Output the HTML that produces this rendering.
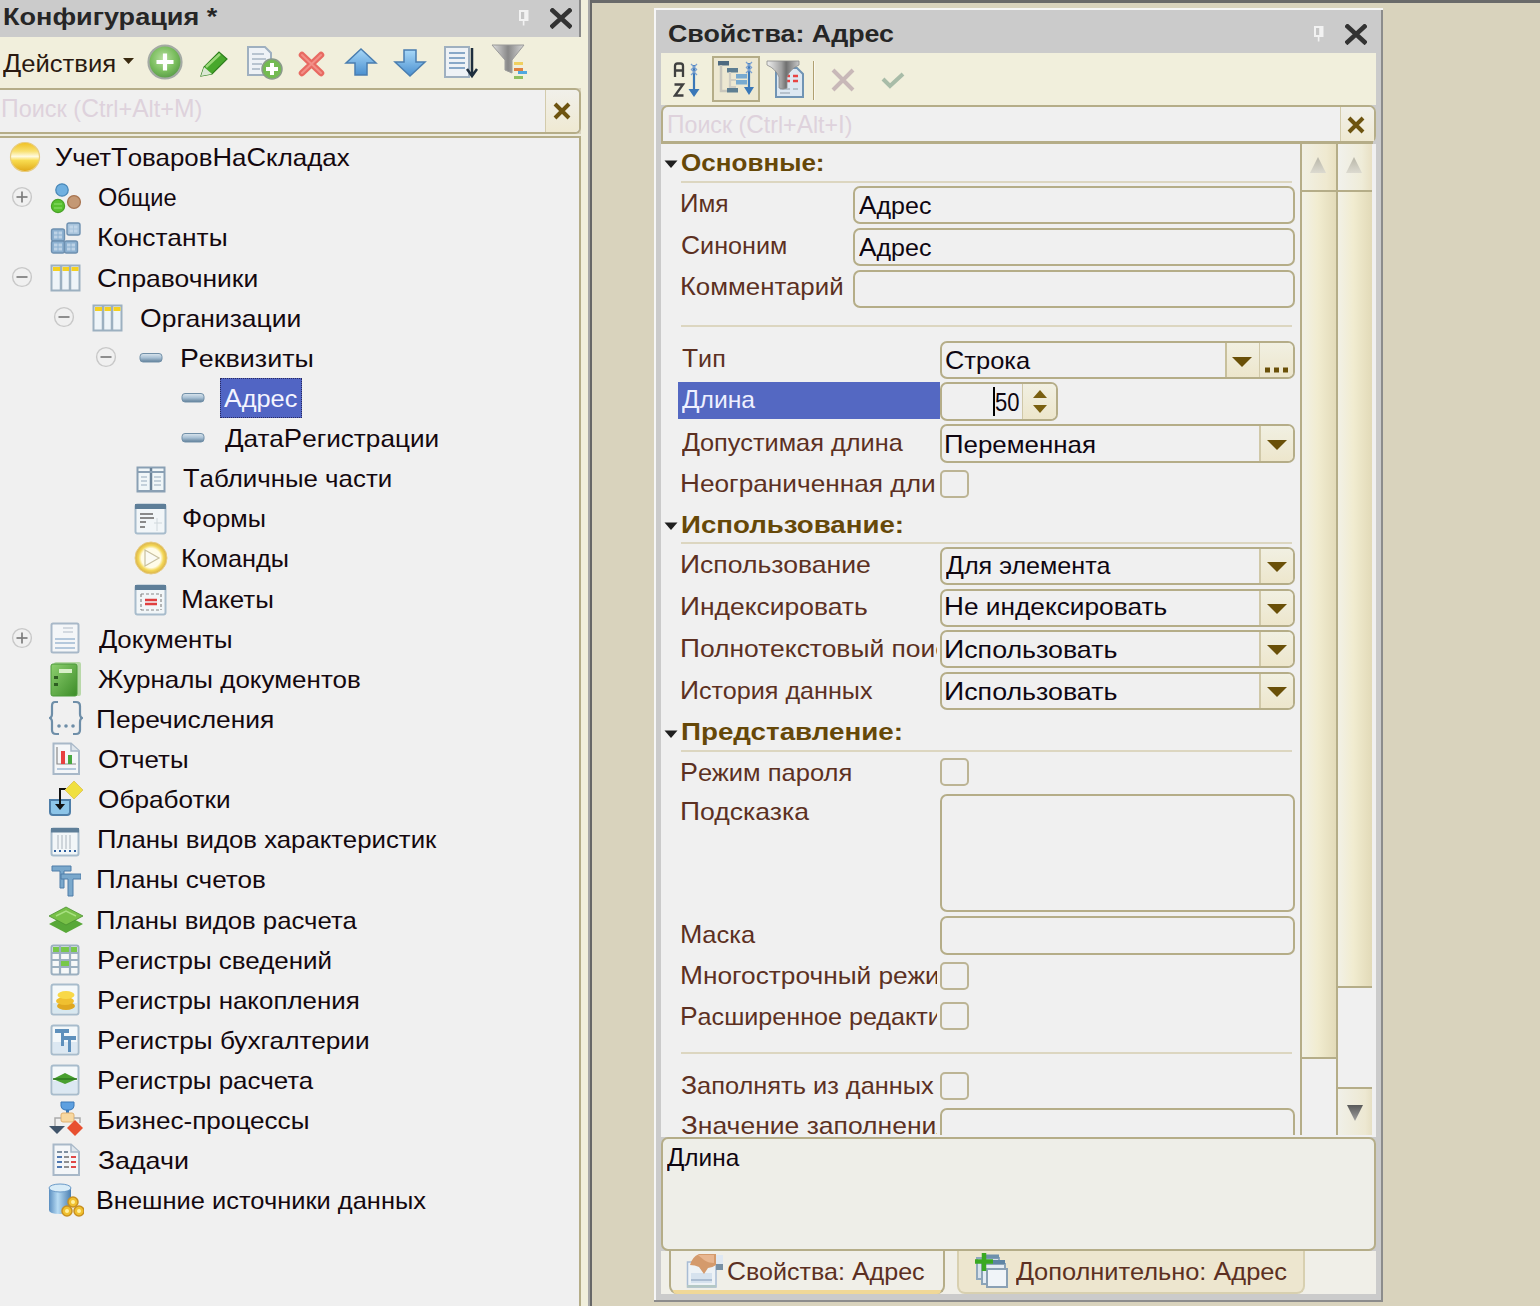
<!DOCTYPE html>
<html><head><meta charset="utf-8"><style>
html,body{margin:0;padding:0}
body{width:1540px;height:1306px;overflow:hidden;position:relative;background:#d9d3bd;font-family:"Liberation Sans",sans-serif}
body div, body svg{position:absolute}
.t{white-space:pre;font-family:"Liberation Sans",sans-serif}
</style></head><body>
<div style="left:590px;top:0px;width:950px;height:3px;background:#6a6a6a"></div>
<div style="left:590px;top:0px;width:2px;height:1306px;background:#676767"></div>
<div style="left:588px;top:0px;width:2px;height:1306px;background:#a8a8a8"></div>
<div style="left:581px;top:0px;width:7px;height:1306px;background:#f1efdc"></div>
<div style="left:0px;top:0px;width:579px;height:37px;background:#cbcbcb"></div>
<div style="left:579px;top:0px;width:2px;height:37px;background:#8a8a8a"></div>
<div style="left:0px;top:37px;width:581px;height:51px;background:#f1efdc"></div>
<div style="left:0px;top:88px;width:581px;height:46px;background:#f0f0f0;border-top:2px solid #b5ad88;border-bottom:2px solid #b5ad88;border-right:2px solid #b5ad88;box-sizing:border-box;border-top-right-radius:6px;border-bottom-right-radius:6px"></div>
<div style="left:545px;top:90px;width:34px;height:42px;background:linear-gradient(#f1f0ea,#efe9d2);border-left:1px solid #d3cbac;box-sizing:border-box;border-top-right-radius:5px;border-bottom-right-radius:5px"></div>
<div style="left:0px;top:134px;width:581px;height:2px;background:#eeede0"></div>
<div style="left:0px;top:136px;width:581px;height:1170px;background:#f0f0f0;border-top:2px solid #b5ad88;border-right:2px solid #b5ad88;box-sizing:border-box"></div>
<div class="t" style="left:2.87px;top:5px;font-size:24px;line-height:24px;color:#262626;font-weight:700;letter-spacing:0px;transform:scaleX(1.1270);transform-origin:0 0;">К<span style="font-size:24px">онфигурация *</span></div>
<svg style="left:519px;top:10px" width="10" height="16" viewBox="0 0 10 16"><rect x="0" y="0" width="9.5" height="11" fill="#f2f2f2"/><rect x="2" y="2" width="3.2" height="7" fill="#c6c6c6"/><rect x="3.8" y="11" width="1.6" height="4.5" fill="#f2f2f2"/></svg>
<svg style="left:550px;top:8px" width="22" height="21" viewBox="0 0 22 21"><path d="M2.5 2.5 L19.5 18 M19.5 2.5 L2.5 18" stroke="#333" stroke-width="4.6" stroke-linecap="square"/></svg>
<div class="t" style="left:3.0px;top:51px;font-size:25px;line-height:25px;color:#2a1a10;font-weight:400;letter-spacing:0px;transform:scaleX(1.0769);transform-origin:0 0;">Д<span style="font-size:23.8px">ействия</span></div>
<svg style="left:123px;top:58px" width="12" height="7" viewBox="0 0 12 7"><path d="M0 0 H11 L5.5 6 Z" fill="#3a2a10"/></svg>
<svg style="left:146px;top:43px" width="38" height="38" viewBox="0 0 38 38"><defs><radialGradient id="gp" cx="45%" cy="40%" r="60%"><stop offset="0" stop-color="#b8e0a0"/><stop offset="0.65" stop-color="#78bc5c"/><stop offset="1" stop-color="#5a9c48"/></radialGradient></defs><circle cx="19" cy="19" r="16.5" fill="url(#gp)" stroke="#a4aaa4" stroke-width="2.2"/><path d="M19 10.5 V27.5 M10.5 19 H27.5" stroke="#fff" stroke-width="4.2"/></svg>
<svg style="left:199px;top:49px" width="31" height="29" viewBox="0 0 31 29"><path d="M2 27 L5 18 L20 3 L28 10 L13 25 Z" fill="#48a82c" stroke="#2e7e1e" stroke-width="1.2"/><path d="M2 27 L5 18 L9 21.5 L13 25 Z" fill="#dce8d4"/><path d="M7 18 L21 5" stroke="#9ad878" stroke-width="2.5"/></svg>
<svg style="left:246px;top:45px" width="38" height="36" viewBox="0 0 38 36"><path d="M2 2 H19 L25 8 V30 H2 Z" fill="#eef2f6" stroke="#9fb0c0" stroke-width="2"/><path d="M6 9 H18 M6 14 H20 M6 19 H16 M6 24 H14" stroke="#b8c4d0" stroke-width="2"/><circle cx="26" cy="24" r="10" fill="#74bb52" stroke="#8a9a8a" stroke-width="1.5"/><path d="M26 18 V30 M20 24 H32" stroke="#fff" stroke-width="4"/></svg>
<svg style="left:297px;top:50px" width="29" height="28" viewBox="0 0 29 28"><path d="M5 5 L24 23 M24 5 L5 23" stroke="#e86a62" stroke-width="6.5" stroke-linecap="round"/><path d="M5 5 L24 23 M24 5 L5 23" stroke="#f29088" stroke-width="2" stroke-linecap="round"/></svg>
<svg style="left:344px;top:47px" width="34" height="31" viewBox="0 0 34 31"><defs><linearGradient id="ua" x1="0" y1="0" x2="0" y2="1"><stop offset="0" stop-color="#a8d8f8"/><stop offset="1" stop-color="#4a90d0"/></linearGradient></defs><path d="M17 2 L32 16 H23 V28 H11 V16 H2 Z" fill="url(#ua)" stroke="#4a7eb0" stroke-width="1.5"/></svg>
<svg style="left:393px;top:47px" width="34" height="31" viewBox="0 0 34 31"><path d="M17 29 L32 15 H23 V3 H11 V15 H2 Z" fill="url(#ua)" stroke="#4a7eb0" stroke-width="1.5"/></svg>
<svg style="left:443px;top:45px" width="35" height="36" viewBox="0 0 35 36"><rect x="2" y="2" width="24" height="30" fill="#eef2f6" stroke="#9fb0c0" stroke-width="2"/><path d="M6 8 H22 M6 13 H22 M6 18 H22 M6 23 H22" stroke="#88a8c8" stroke-width="2"/><path d="M29 3 V30 M24 24 L29 31 L34 24" stroke="#1e2e3e" stroke-width="2.5" fill="none"/></svg>
<svg style="left:490px;top:43px" width="40" height="38" viewBox="0 0 40 38"><defs><linearGradient id="fn" x1="0" x2="1"><stop offset="0" stop-color="#e0e0e0"/><stop offset="0.5" stop-color="#888"/><stop offset="1" stop-color="#d8d8d8"/></linearGradient></defs><path d="M2 2 H34 L22 17 V30 L15 27 V17 Z" fill="url(#fn)" stroke="#9a9a9a" stroke-width="1"/><rect x="24" y="19" width="9" height="3" fill="#f0d060"/><rect x="24" y="25" width="9" height="3" fill="#e08040"/><rect x="28" y="28" width="9" height="3" fill="#50a8e0"/><rect x="24" y="33" width="9" height="3" fill="#90c060"/></svg>
<div class="t" style="left:0.53px;top:96px;font-size:25px;line-height:25px;color:#ded2dc;font-weight:400;letter-spacing:0px;transform:scaleX(0.9851);transform-origin:0 0;">П<span style="font-size:23.8px">оиск (</span>C<span style="font-size:23.8px">trl+</span>A<span style="font-size:23.8px">lt+</span>M<span style="font-size:23.8px">)</span></div>
<svg style="left:552px;top:101px" width="20" height="20" viewBox="0 0 20 20"><path d="M3 3 L17 17 M17 3 L3 17" stroke="#6e5410" stroke-width="4"/></svg>
<svg style="left:9px;top:141px" width="32" height="32" viewBox="0 0 32 32"><defs><linearGradient id="gb" x1="0" y1="0" x2="0" y2="1"><stop offset="0" stop-color="#f0c020"/><stop offset="0.3" stop-color="#f8e070"/><stop offset="0.48" stop-color="#fffae0"/><stop offset="0.62" stop-color="#f8dc50"/><stop offset="1" stop-color="#e0a818"/></linearGradient></defs><circle cx="16" cy="16" r="14.5" fill="url(#gb)" stroke="#e8cc80" stroke-width="1.2"/></svg>
<div class="t" style="left:55.11px;top:145px;font-size:25px;line-height:25px;color:#14080e;font-weight:400;letter-spacing:0px;transform:scaleX(1.0867);transform-origin:0 0;">У<span style="font-size:23.8px">чет</span>Т<span style="font-size:23.8px">оваров</span>Н<span style="font-size:23.8px">а</span>С<span style="font-size:23.8px">кладах</span></div>
<svg style="left:11px;top:186px" width="22" height="22" viewBox="0 0 22 22"><circle cx="11" cy="11" r="9.4" fill="none" stroke="#c8c8c8" stroke-width="1.4"/><path d="M5.5 11 H16.5" stroke="#7c7c7c" stroke-width="1.7"/><path d="M11 5.5 V16.5" stroke="#7c7c7c" stroke-width="1.7"/></svg>
<svg style="left:50px;top:183px" width="32" height="32" viewBox="0 0 32 32"><circle cx="12" cy="7" r="6.2" fill="#70b0e0" stroke="#4a88b8" stroke-width="1.3"/><circle cx="8" cy="23" r="6.6" fill="#58c030" stroke="#48a028" stroke-width="1.2"/><path d="M4 21 H12 M4 25 H12" stroke="#90e070" stroke-width="1"/><circle cx="24" cy="19" r="6.4" fill="#c49874" stroke="#a87450" stroke-width="1.3"/></svg>
<div class="t" style="left:98.01px;top:185px;font-size:25px;line-height:25px;color:#14080e;font-weight:400;letter-spacing:0px;transform:scaleX(0.9922);transform-origin:0 0;">О<span style="font-size:23.8px">бщие</span></div>
<svg style="left:50px;top:222px" width="32" height="32" viewBox="0 0 32 32"><rect x="1.5" y="7" width="13" height="12" rx="2" fill="#8cb0d0" stroke="#6e90b0" stroke-width="1.4"/><rect x="4.0" y="9.5" width="3.5" height="3" fill="#c4d8ea" opacity="0.85"/><rect x="4.0" y="13.5" width="3.5" height="3" fill="#c4d8ea" opacity="0.85"/><rect x="8.5" y="9.5" width="3.5" height="3" fill="#c4d8ea" opacity="0.85"/><rect x="8.5" y="13.5" width="3.5" height="3" fill="#c4d8ea" opacity="0.85"/><rect x="1.5" y="19" width="13" height="12" rx="2" fill="#8cb0d0" stroke="#6e90b0" stroke-width="1.4"/><rect x="4.0" y="21.5" width="3.5" height="3" fill="#c4d8ea" opacity="0.85"/><rect x="4.0" y="25.5" width="3.5" height="3" fill="#c4d8ea" opacity="0.85"/><rect x="8.5" y="21.5" width="3.5" height="3" fill="#c4d8ea" opacity="0.85"/><rect x="8.5" y="25.5" width="3.5" height="3" fill="#c4d8ea" opacity="0.85"/><rect x="14.5" y="19" width="13" height="12" rx="2" fill="#8cb0d0" stroke="#6e90b0" stroke-width="1.4"/><rect x="17.0" y="21.5" width="3.5" height="3" fill="#c4d8ea" opacity="0.85"/><rect x="17.0" y="25.5" width="3.5" height="3" fill="#c4d8ea" opacity="0.85"/><rect x="21.5" y="21.5" width="3.5" height="3" fill="#c4d8ea" opacity="0.85"/><rect x="21.5" y="25.5" width="3.5" height="3" fill="#c4d8ea" opacity="0.85"/><rect x="17" y="1" width="13" height="12" rx="2" fill="#a8c4dc" stroke="#6e90b0" stroke-width="1.4"/><rect x="19.5" y="3.5" width="3.5" height="3" fill="#c4d8ea" opacity="0.85"/><rect x="19.5" y="7.5" width="3.5" height="3" fill="#c4d8ea" opacity="0.85"/><rect x="24" y="3.5" width="3.5" height="3" fill="#c4d8ea" opacity="0.85"/><rect x="24" y="7.5" width="3.5" height="3" fill="#c4d8ea" opacity="0.85"/></svg>
<div class="t" style="left:96.78px;top:225px;font-size:25px;line-height:25px;color:#14080e;font-weight:400;letter-spacing:0px;transform:scaleX(1.1079);transform-origin:0 0;">К<span style="font-size:23.8px">онстанты</span></div>
<svg style="left:11px;top:266px" width="22" height="22" viewBox="0 0 22 22"><circle cx="11" cy="11" r="9.4" fill="none" stroke="#c8c8c8" stroke-width="1.4"/><path d="M5.5 11 H16.5" stroke="#7c7c7c" stroke-width="1.7"/></svg>
<svg style="left:50px;top:264px" width="32" height="28" viewBox="0 0 32 28"><rect x="1.5" y="1.5" width="28" height="25" fill="#eef4f8" stroke="#9cb0c0" stroke-width="2"/><path d="M11 2 V26 M20 2 V26" stroke="#9cb0c0" stroke-width="2.5"/><rect x="3" y="3" width="7" height="4" fill="#f4d020"/><rect x="12.5" y="3" width="6.5" height="4" fill="#f4d020"/><rect x="21.5" y="3" width="7" height="4" fill="#f4d020"/></svg>
<div class="t" style="left:97.49px;top:266px;font-size:25px;line-height:25px;color:#14080e;font-weight:400;letter-spacing:0px;transform:scaleX(1.1112);transform-origin:0 0;">С<span style="font-size:23.8px">правочники</span></div>
<svg style="left:53px;top:306px" width="22" height="22" viewBox="0 0 22 22"><circle cx="11" cy="11" r="9.4" fill="none" stroke="#c8c8c8" stroke-width="1.4"/><path d="M5.5 11 H16.5" stroke="#7c7c7c" stroke-width="1.7"/></svg>
<svg style="left:92px;top:304px" width="32" height="28" viewBox="0 0 32 28"><rect x="1.5" y="1.5" width="28" height="25" fill="#eef4f8" stroke="#9cb0c0" stroke-width="2"/><path d="M11 2 V26 M20 2 V26" stroke="#9cb0c0" stroke-width="2.5"/><rect x="3" y="3" width="7" height="4" fill="#f4d020"/><rect x="12.5" y="3" width="6.5" height="4" fill="#f4d020"/><rect x="21.5" y="3" width="7" height="4" fill="#f4d020"/></svg>
<div class="t" style="left:139.89px;top:306px;font-size:25px;line-height:25px;color:#14080e;font-weight:400;letter-spacing:0px;transform:scaleX(1.1134);transform-origin:0 0;">О<span style="font-size:23.8px">рганизации</span></div>
<svg style="left:95px;top:346px" width="22" height="22" viewBox="0 0 22 22"><circle cx="11" cy="11" r="9.4" fill="none" stroke="#c8c8c8" stroke-width="1.4"/><path d="M5.5 11 H16.5" stroke="#7c7c7c" stroke-width="1.7"/></svg>
<svg style="left:139px;top:352px" width="24" height="12" viewBox="0 0 24 12"><defs><linearGradient id="ga" x1="0" y1="0" x2="0" y2="1"><stop offset="0" stop-color="#dbe6ee"/><stop offset="0.5" stop-color="#a8c0d4"/><stop offset="1" stop-color="#5e7e98"/></linearGradient></defs><rect x="1" y="1.5" width="22" height="8.5" rx="3" fill="url(#ga)" stroke="#7290a8" stroke-width="1"/></svg>
<div class="t" style="left:180.44px;top:346px;font-size:25px;line-height:25px;color:#14080e;font-weight:400;letter-spacing:0px;transform:scaleX(1.1296);transform-origin:0 0;">Р<span style="font-size:23.8px">еквизиты</span></div>
<svg style="left:181px;top:392px" width="24" height="12" viewBox="0 0 24 12"><defs><linearGradient id="ga" x1="0" y1="0" x2="0" y2="1"><stop offset="0" stop-color="#dbe6ee"/><stop offset="0.5" stop-color="#a8c0d4"/><stop offset="1" stop-color="#5e7e98"/></linearGradient></defs><rect x="1" y="1.5" width="22" height="8.5" rx="3" fill="url(#ga)" stroke="#7290a8" stroke-width="1"/></svg>
<div style="left:220px;top:378px;width:82px;height:40px;background:#5165c4;outline:1px dotted #2a2a60;outline-offset:-1px"></div>
<div class="t" style="left:224.3px;top:386px;font-size:25px;line-height:25px;color:#f4f4ff;font-weight:400;letter-spacing:0px;transform:scaleX(1.0632);transform-origin:0 0;">А<span style="font-size:23.8px">дрес</span></div>
<svg style="left:181px;top:432px" width="24" height="12" viewBox="0 0 24 12"><defs><linearGradient id="ga" x1="0" y1="0" x2="0" y2="1"><stop offset="0" stop-color="#dbe6ee"/><stop offset="0.5" stop-color="#a8c0d4"/><stop offset="1" stop-color="#5e7e98"/></linearGradient></defs><rect x="1" y="1.5" width="22" height="8.5" rx="3" fill="url(#ga)" stroke="#7290a8" stroke-width="1"/></svg>
<div class="t" style="left:224.5px;top:426px;font-size:25px;line-height:25px;color:#14080e;font-weight:400;letter-spacing:0px;transform:scaleX(1.0984);transform-origin:0 0;">Д<span style="font-size:23.8px">ата</span>Р<span style="font-size:23.8px">егистрации</span></div>
<svg style="left:136px;top:466px" width="30" height="28" viewBox="0 0 30 28"><rect x="1.5" y="1.5" width="27" height="24" fill="#f0f6f8" stroke="#8aa0b4" stroke-width="2"/><path d="M15 2 V26" stroke="#6a8298" stroke-width="2.5"/><path d="M2 6 H28 M2 25 H28" stroke="#8aa0b4" stroke-width="2"/><path d="M5 11 H11 M5 15 H11 M5 19 H11 M18 11 H25 M18 15 H25 M18 19 H25" stroke="#b4c4d0" stroke-width="1.5"/></svg>
<div class="t" style="left:183.4px;top:466px;font-size:25px;line-height:25px;color:#14080e;font-weight:400;letter-spacing:0px;transform:scaleX(1.0869);transform-origin:0 0;">Т<span style="font-size:23.8px">абличные части</span></div>
<svg style="left:134px;top:503px" width="34" height="32" viewBox="0 0 34 32"><rect x="1.5" y="1.5" width="30" height="29" rx="2" fill="#f2f6f8" stroke="#a8bccc" stroke-width="2"/><rect x="1" y="1" width="31" height="5" fill="#5e7e98"/><path d="M6 11 H19 M6 15 H20 M6 19 H12 M6 24 H11" stroke="#8a8a8a" stroke-width="2.2"/><path d="M20 20 H28 M23 15 V28" stroke="#d0d8dc" stroke-width="1"/></svg>
<div class="t" style="left:181.64px;top:506px;font-size:25px;line-height:25px;color:#14080e;font-weight:400;letter-spacing:0px;transform:scaleX(1.0632);transform-origin:0 0;">Ф<span style="font-size:23.8px">ормы</span></div>
<svg style="left:134px;top:541px" width="34" height="34" viewBox="0 0 34 34"><defs><radialGradient id="gc" cx="50%" cy="50%" r="50%"><stop offset="0.6" stop-color="#fffce8"/><stop offset="0.78" stop-color="#f4d858"/><stop offset="1" stop-color="#d8b048"/></radialGradient></defs><circle cx="17" cy="17" r="16" fill="url(#gc)" stroke="#e8cc80" stroke-width="1"/><path d="M11 9 L25 17 L11 25 Z" fill="#fbfbf4" stroke="#c8c0a0" stroke-width="1.2"/></svg>
<div class="t" style="left:180.58px;top:546px;font-size:25px;line-height:25px;color:#14080e;font-weight:400;letter-spacing:0px;transform:scaleX(1.0622);transform-origin:0 0;">К<span style="font-size:23.8px">оманды</span></div>
<svg style="left:134px;top:584px" width="34" height="32" viewBox="0 0 34 32"><rect x="1.5" y="1.5" width="30" height="29" rx="2" fill="#f2f6f8" stroke="#a8bccc" stroke-width="2"/><rect x="1" y="1" width="31" height="5" fill="#5e7e98"/><path d="M7 10 H27 M7 26 H27" stroke="#888" stroke-width="1.2" stroke-dasharray="3 2"/><path d="M7 10 V26 M27 10 V26" stroke="#888" stroke-width="1.2" stroke-dasharray="3 2"/><path d="M11 16 H23 M11 20 H23" stroke="#e04040" stroke-width="2.5"/></svg>
<div class="t" style="left:180.52px;top:587px;font-size:25px;line-height:25px;color:#14080e;font-weight:400;letter-spacing:0px;transform:scaleX(1.0902);transform-origin:0 0;">М<span style="font-size:23.8px">акеты</span></div>
<svg style="left:11px;top:627px" width="22" height="22" viewBox="0 0 22 22"><circle cx="11" cy="11" r="9.4" fill="none" stroke="#c8c8c8" stroke-width="1.4"/><path d="M5.5 11 H16.5" stroke="#7c7c7c" stroke-width="1.7"/><path d="M11 5.5 V16.5" stroke="#7c7c7c" stroke-width="1.7"/></svg>
<svg style="left:50px;top:622px" width="30" height="32" viewBox="0 0 30 32"><rect x="1.5" y="1.5" width="27" height="29" rx="1.5" fill="#f4f6f8" stroke="#a8b8c8" stroke-width="2"/><path d="M13 6 H23 M13 10 H23" stroke="#c8d0d8" stroke-width="1.5"/><path d="M5 17 H25 M5 21 H25 M5 26 H25" stroke="#b4c8dc" stroke-width="2"/></svg>
<div class="t" style="left:98.6px;top:627px;font-size:25px;line-height:25px;color:#14080e;font-weight:400;letter-spacing:0px;transform:scaleX(1.0844);transform-origin:0 0;">Д<span style="font-size:23.8px">окументы</span></div>
<svg style="left:50px;top:661px" width="32" height="36" viewBox="0 0 32 36"><defs><linearGradient id="gj" x1="0" y1="0" x2="1" y2="1"><stop offset="0" stop-color="#8ed070"/><stop offset="1" stop-color="#3c8c28"/></linearGradient></defs><rect x="4" y="1" width="27" height="34" rx="2" fill="#b8d8a8"/><rect x="1" y="3" width="26" height="32" rx="2" fill="url(#gj)" stroke="#4a9a38" stroke-width="1"/><rect x="9" y="8" width="13" height="4" fill="#d8f0c8"/><rect x="4" y="15" width="4" height="3" fill="#2e5e22"/><rect x="4" y="22" width="4" height="3" fill="#2e5e22"/></svg>
<div class="t" style="left:97.51px;top:667px;font-size:25px;line-height:25px;color:#14080e;font-weight:400;letter-spacing:0px;transform:scaleX(1.0921);transform-origin:0 0;">Ж<span style="font-size:23.8px">урналы документов</span></div>
<svg style="left:49px;top:700px" width="34" height="36" viewBox="0 0 34 36"><path d="M9 2 H6 Q3 2 3 6 V14 Q3 17 1 18 Q3 19 3 22 V30 Q3 34 7 34 H10 M24 2 H27 Q31 2 31 6 V14 Q31 17 33 18 Q31 19 31 22 V30 Q31 34 27 34 H24" stroke="#6e8ea8" stroke-width="2.2" fill="none"/><circle cx="10" cy="26" r="1.8" fill="#6e8ea8"/><circle cx="17" cy="26" r="1.8" fill="#6e8ea8"/><circle cx="24" cy="26" r="1.8" fill="#6e8ea8"/></svg>
<div class="t" style="left:96.38px;top:707px;font-size:25px;line-height:25px;color:#14080e;font-weight:400;letter-spacing:0px;transform:scaleX(1.1083);transform-origin:0 0;">П<span style="font-size:23.8px">еречисления</span></div>
<svg style="left:52px;top:742px" width="30" height="34" viewBox="0 0 30 34"><path d="M1.5 1.5 H19 L27 9 V32 H1.5 Z" fill="#f4f6f8" stroke="#a8b8c8" stroke-width="2"/><path d="M19 2 V9 H27" fill="#dfe6ec" stroke="#a8b8c8" stroke-width="1.5"/><path d="M5 5 V22 H24" stroke="#8a8a8a" stroke-width="1.2" fill="none"/><rect x="9" y="9" width="4" height="13" fill="#e84040"/><rect x="16" y="13" width="4" height="9" fill="#48a840"/><path d="M5 27 H24" stroke="#b4c8dc" stroke-width="2"/></svg>
<div class="t" style="left:97.51px;top:747px;font-size:25px;line-height:25px;color:#14080e;font-weight:400;letter-spacing:0px;transform:scaleX(1.0889);transform-origin:0 0;">О<span style="font-size:23.8px">тчеты</span></div>
<svg style="left:48px;top:780px" width="36" height="36" viewBox="0 0 36 36"><path d="M2 20 H22 V32 Q22 35 19 35 H5 Q2 35 2 32 Z" fill="#8cc4e8" stroke="#4e7ea8" stroke-width="2"/><path d="M12 26 V9 H22" stroke="#111" stroke-width="2" fill="none"/><path d="M7 24 L12 30 L17 24 Z" fill="#111"/><path d="M26 1 L35 10 L26 19 L17 10 Z" fill="#f0e040" stroke="#e0c860" stroke-width="1"/></svg>
<div class="t" style="left:97.5px;top:787px;font-size:25px;line-height:25px;color:#14080e;font-weight:400;letter-spacing:0px;transform:scaleX(1.1000);transform-origin:0 0;">О<span style="font-size:23.8px">бработки</span></div>
<svg style="left:50px;top:827px" width="30" height="30" viewBox="0 0 30 30"><rect x="1.5" y="1.5" width="27" height="27" rx="2" fill="#f2f6f8" stroke="#a8bccc" stroke-width="2"/><rect x="1" y="1" width="28" height="4.5" fill="#5e7e98"/><path d="M8 8 V22 M12 8 V22 M16 8 V22 M20 8 V22" stroke="#b8c0c8" stroke-width="1.2"/><path d="M4 24 H26" stroke="#3060a0" stroke-width="2" stroke-dasharray="2 3"/></svg>
<div class="t" style="left:97.03px;top:827px;font-size:25px;line-height:25px;color:#14080e;font-weight:400;letter-spacing:0px;transform:scaleX(1.0836);transform-origin:0 0;">П<span style="font-size:23.8px">ланы видов характеристик</span></div>
<svg style="left:51px;top:865px" width="30" height="32" viewBox="0 0 30 32"><g fill="#7aa8cc" stroke="#4e7ca8" stroke-width="1"><path d="M1 1 H20 V6 H13 V23 H9 V6 H1 Z"/><path d="M10 9 H30 V14 H22 V31 H17 V14 H10 Z"/></g></svg>
<div class="t" style="left:96.41px;top:867px;font-size:25px;line-height:25px;color:#14080e;font-weight:400;letter-spacing:0px;transform:scaleX(1.0961);transform-origin:0 0;">П<span style="font-size:23.8px">ланы счетов</span></div>
<svg style="left:48px;top:906px" width="36" height="28" viewBox="0 0 36 28"><path d="M1 18 L18 9 L35 18 L18 27 Z" fill="#58a838"/><path d="M1 10 L18 1 L35 10 L18 19 Z" fill="#78c048" stroke="#4a9030" stroke-width="0.8"/><path d="M8 10 L18 5 L28 10" stroke="#a8e080" stroke-width="1.5" fill="none"/></svg>
<div class="t" style="left:96.44px;top:908px;font-size:25px;line-height:25px;color:#14080e;font-weight:400;letter-spacing:0px;transform:scaleX(1.0816);transform-origin:0 0;">П<span style="font-size:23.8px">ланы видов расчета</span></div>
<svg style="left:50px;top:944px" width="30" height="32" viewBox="0 0 30 32"><rect x="1.5" y="1.5" width="27" height="29" rx="2" fill="#f6f8f8" stroke="#9cb0c0" stroke-width="2"/><rect x="3" y="3" width="24" height="5" fill="#78c848"/><path d="M10 2 V30 M20 2 V30 M2 9 H28 M2 16 H28 M2 23 H28" stroke="#9cb0c0" stroke-width="2.2"/><rect x="11" y="17" width="8" height="5" fill="#78c848"/></svg>
<div class="t" style="left:96.52px;top:948px;font-size:25px;line-height:25px;color:#14080e;font-weight:400;letter-spacing:0px;transform:scaleX(1.0910);transform-origin:0 0;">Р<span style="font-size:23.8px">егистры сведений</span></div>
<svg style="left:50px;top:983px" width="30" height="33" viewBox="0 0 30 33"><rect x="1.5" y="1.5" width="27" height="30" rx="2" fill="#f4f8fa" stroke="#a8bccc" stroke-width="2"/><rect x="3" y="20" width="24" height="10" fill="#d8e8f0"/><ellipse cx="16" cy="23" rx="9" ry="4" fill="#e0a820"/><ellipse cx="15" cy="18" rx="9" ry="4" fill="#f0c030"/><ellipse cx="16" cy="12" rx="8.5" ry="4" fill="#f8d848"/></svg>
<div class="t" style="left:96.52px;top:988px;font-size:25px;line-height:25px;color:#14080e;font-weight:400;letter-spacing:0px;transform:scaleX(1.0895);transform-origin:0 0;">Р<span style="font-size:23.8px">егистры накопления</span></div>
<svg style="left:50px;top:1024px" width="30" height="32" viewBox="0 0 30 32"><rect x="1.5" y="1.5" width="27" height="29" rx="2" fill="#f4f8fa" stroke="#a8bccc" stroke-width="2"/><rect x="3" y="18" width="24" height="11" fill="#dce8f2"/><g fill="#5e90bc"><path d="M5 5 H19 V9 H14 V22 H11 V9 H5 Z"/><path d="M12 12 H26 V16 H21 V28 H18 V16 H12 Z"/></g></svg>
<div class="t" style="left:96.5px;top:1028px;font-size:25px;line-height:25px;color:#14080e;font-weight:400;letter-spacing:0px;transform:scaleX(1.1012);transform-origin:0 0;">Р<span style="font-size:23.8px">егистры бухгалтерии</span></div>
<svg style="left:50px;top:1064px" width="30" height="32" viewBox="0 0 30 32"><rect x="1.5" y="1.5" width="27" height="29" rx="2" fill="#f4f8fa" stroke="#a8bccc" stroke-width="2"/><rect x="3" y="17" width="24" height="12" fill="#dce8f2"/><path d="M3 15 L15 9 L27 15 L15 20 Z" fill="#48a030"/><path d="M3 15 H27" stroke="#2e7a20" stroke-width="1.5"/></svg>
<div class="t" style="left:96.52px;top:1068px;font-size:25px;line-height:25px;color:#14080e;font-weight:400;letter-spacing:0px;transform:scaleX(1.0898);transform-origin:0 0;">Р<span style="font-size:23.8px">егистры расчета</span></div>
<svg style="left:48px;top:1101px" width="36" height="36" viewBox="0 0 36 36"><path d="M13 1 H26 V5 Q26 8 22 9 H17 Q13 8 13 5 Z" fill="#5ea0e0" stroke="#3a78b8" stroke-width="1"/><rect x="18" y="9" width="3" height="4" fill="#3a78b8"/><rect x="13" y="12" width="13" height="9" rx="2" fill="#f8d8a0" stroke="#e0b070" stroke-width="1"/><path d="M7 26 V17 H13 M26 17 H32 V22" stroke="#aaa" stroke-width="1.5" fill="none"/><path d="M1 25 H17 L9 33 Z" fill="#40546a"/><path d="M27 19 L35 27 L27 35 L19 27 Z" fill="#e85030"/></svg>
<div class="t" style="left:96.51px;top:1108px;font-size:25px;line-height:25px;color:#14080e;font-weight:400;letter-spacing:0px;transform:scaleX(1.0968);transform-origin:0 0;">Б<span style="font-size:23.8px">изнес-процессы</span></div>
<svg style="left:52px;top:1143px" width="30" height="34" viewBox="0 0 30 34"><path d="M1.5 1.5 H19 L27 9 V32 H1.5 Z" fill="#f4f6f8" stroke="#a8b8c8" stroke-width="2"/><path d="M19 2 V9 H27" fill="#dfe6ec" stroke="#a8b8c8" stroke-width="1.5"/><g stroke-width="2"><path d="M5 9 H10 M12 9 H16" stroke="#8090a0"/><path d="M5 14 H10" stroke="#5078b0"/><path d="M12 14 H17" stroke="#909090"/><path d="M19 14 H24" stroke="#e04848"/><path d="M5 19 H10" stroke="#5078b0"/><path d="M12 19 H17" stroke="#909090"/><path d="M19 19 H24" stroke="#e04848"/><path d="M5 24 H10" stroke="#5078b0"/><path d="M12 24 H17" stroke="#909090"/><path d="M19 24 H24" stroke="#e04848"/></g></svg>
<div class="t" style="left:97.57px;top:1148px;font-size:25px;line-height:25px;color:#14080e;font-weight:400;letter-spacing:0px;transform:scaleX(1.1269);transform-origin:0 0;">З<span style="font-size:23.8px">адачи</span></div>
<svg style="left:48px;top:1183px" width="36" height="34" viewBox="0 0 36 34"><defs><linearGradient id="ge" x1="0" x2="1"><stop offset="0" stop-color="#5a8ec0"/><stop offset="0.4" stop-color="#b8dcf4"/><stop offset="1" stop-color="#4a7eb0"/></linearGradient></defs><path d="M1 5 V27 Q1 31 12 31 Q23 31 23 27 V5 Z" fill="url(#ge)"/><ellipse cx="12" cy="5" rx="11" ry="4" fill="#d8ecf8" stroke="#6a9ac8" stroke-width="1"/><g fill="#f0c030" stroke="#c89020" stroke-width="1.5"><circle cx="25" cy="19" r="5"/><circle cx="19" cy="28" r="5"/><circle cx="31" cy="28" r="5"/></g><g fill="#fff0a0"><circle cx="25" cy="19" r="2"/><circle cx="19" cy="28" r="2"/><circle cx="31" cy="28" r="2"/></g></svg>
<div class="t" style="left:96.26px;top:1188px;font-size:25px;line-height:25px;color:#14080e;font-weight:400;letter-spacing:0px;transform:scaleX(1.0696);transform-origin:0 0;">В<span style="font-size:23.8px">нешние источники данных</span></div>
<div style="left:654px;top:8px;width:729px;height:1294px;background:#cbcbcb"></div>
<div style="left:654px;top:8px;width:729px;height:2px;background:#f6f6f6"></div>
<div style="left:654px;top:8px;width:2px;height:1294px;background:#f6f6f6"></div>
<div style="left:1381px;top:10px;width:2px;height:1292px;background:#8c8c8c"></div>
<div style="left:654px;top:1300px;width:729px;height:2px;background:#8c8c8c"></div>
<div class="t" style="left:668.38px;top:22px;font-size:24px;line-height:24px;color:#262626;font-weight:700;letter-spacing:0px;transform:scaleX(1.1169);transform-origin:0 0;">С<span style="font-size:24px">войства: </span>А<span style="font-size:24px">дрес</span></div>
<svg style="left:1314px;top:26px" width="10" height="16" viewBox="0 0 10 16"><rect x="0" y="0" width="9.5" height="11" fill="#f2f2f2"/><rect x="2" y="2" width="3.2" height="7" fill="#c6c6c6"/><rect x="3.8" y="11" width="1.6" height="4.5" fill="#f2f2f2"/></svg>
<svg style="left:1345px;top:24px" width="22" height="21" viewBox="0 0 22 21"><path d="M2.5 2.5 L19.5 18 M19.5 2.5 L2.5 18" stroke="#333" stroke-width="4.6" stroke-linecap="square"/></svg>
<div style="left:661px;top:53px;width:715px;height:52px;background:#f1efdc"></div>
<svg style="left:673px;top:62px" width="28" height="37" viewBox="0 0 28 37"><g fill="none" stroke="#404040" stroke-width="2.3"><path d="M2 15 V4 Q2 1.5 4.5 1.5 H7.5 Q10 1.5 10 4 V15 M2 8.5 H10"/><path d="M1.5 22.5 H10 L2 33.5 H10.5"/></g><path d="M21 3 V33" stroke="#3a78b8" stroke-width="2.2"/><path d="M15.5 27 L21 35 L26.5 27 Z" fill="#3a78b8"/><path d="M18 2 L24 8 M24 2 L18 8 M18 7 L24 13 M24 7 L18 13" stroke="#7aa0d0" stroke-width="1.3"/></svg>
<div style="left:712px;top:56px;width:48px;height:46px;background:#ede8d2;border:2px solid #b5ad88;box-sizing:border-box"></div>
<svg style="left:716px;top:60px" width="40" height="38" viewBox="0 0 40 38"><rect x="2" y="1" width="11" height="4.5" fill="#4e6a80"/><path d="M5 5 V31 H11" stroke="#c8c6bc" stroke-width="2.5" fill="none"/><rect x="11" y="8" width="11" height="4.5" fill="#5e7e92"/><path d="M14 12 V27 H20 M14 20 H20" stroke="#d0cec4" stroke-width="2.2" fill="none"/><rect x="20" y="14" width="11" height="4.5" fill="#78aad0"/><rect x="20" y="20" width="11" height="4.5" fill="#78aad0"/><rect x="11" y="28" width="11" height="4.5" fill="#5e7e92"/><path d="M33 3 V33" stroke="#3a78b8" stroke-width="2.2"/><path d="M28 27 L33 35 L38 27 Z" fill="#3a78b8"/><path d="M30 2 L36 8 M36 2 L30 8 M30 7 L36 13 M36 7 L30 13" stroke="#7aa0d0" stroke-width="1.3"/></svg>
<svg style="left:766px;top:60px" width="40" height="40" viewBox="0 0 40 40"><defs><linearGradient id="fn2" x1="0" x2="1"><stop offset="0" stop-color="#f0f0f0"/><stop offset="0.45" stop-color="#a0a0a0"/><stop offset="0.6" stop-color="#707070"/><stop offset="1" stop-color="#c8c8c8"/></linearGradient></defs><path d="M10 8 H31 L37 14 V37 H10 Z" fill="#dde8f2" stroke="#7094b4" stroke-width="2"/><path d="M19 16 H24 M27 16 H32 M19 21 H24 M27 21 H32" stroke="#e84444" stroke-width="2.5"/><path d="M14 29 H24 M27 29 H32 M14 33 H24" stroke="#a8b4c0" stroke-width="1.5"/><path d="M1 1 H33 V5 Q24 9 21 17 V28 Q17 30 13 28 V17 Q10 9 1 5 Z" fill="url(#fn2)" stroke="#8a8a8a" stroke-width="0.8"/></svg>
<div style="left:813px;top:61px;width:1px;height:39px;background:#b0a070"></div>
<div style="left:814px;top:61px;width:1px;height:39px;background:#faf8ee"></div>
<svg style="left:829px;top:66px" width="28" height="28" viewBox="0 0 28 28"><path d="M4 4 L24 24 M24 4 L4 24" stroke="#c8b8b8" stroke-width="4"/></svg>
<svg style="left:880px;top:70px" width="26" height="20" viewBox="0 0 26 20"><path d="M3 9 L10 16 L23 4" stroke="#a8bca8" stroke-width="4" fill="none"/></svg>
<div style="left:661px;top:105px;width:715px;height:38px;background:#f0f0f0;border:2px solid #b5ad88;border-bottom:none;box-sizing:border-box;border-radius:7px 7px 7px 0"></div>
<div style="left:661px;top:141px;width:712px;height:3px;background:#b5ad88"></div>
<div style="left:1340px;top:107px;width:34px;height:34px;background:linear-gradient(#f1f0ea,#efe9d2);border-left:1px solid #d3cbac;box-sizing:border-box;border-top-right-radius:5px"></div>
<div class="t" style="left:666.65px;top:112px;font-size:25px;line-height:25px;color:#ded2dc;font-weight:400;letter-spacing:0px;transform:scaleX(0.9738);transform-origin:0 0;">П<span style="font-size:23.8px">оиск (</span>C<span style="font-size:23.8px">trl+</span>A<span style="font-size:23.8px">lt+</span>I<span style="font-size:23.8px">)</span></div>
<svg style="left:1346px;top:115px" width="20" height="20" viewBox="0 0 20 20"><path d="M3 3 L17 17 M17 3 L3 17" stroke="#6e5410" stroke-width="4"/></svg>
<div style="left:661px;top:144px;width:715px;height:991px;background:#f0f0f0"></div>
<svg style="left:664px;top:160px" width="14" height="9" viewBox="0 0 14 9"><path d="M0.5 0.5 H13.5 L7 8 Z" fill="#1e1e1e"/></svg>
<div class="t" style="left:681.31px;top:151px;font-size:24px;line-height:24px;color:#664808;font-weight:700;letter-spacing:0px;transform:scaleX(1.0853);transform-origin:0 0;">О<span style="font-size:24px">сновные:</span></div>
<div style="left:681px;top:181px;width:611px;height:2px;background:#dcd6c0"></div>
<div class="t" style="left:680.25px;top:191px;font-size:25px;line-height:25px;color:#5c3022;font-weight:400;letter-spacing:0px;transform:scaleX(1.0273);transform-origin:0 0;">И<span style="font-size:23.8px">мя</span></div>
<div style="left:853px;top:186px;width:442px;height:38px;background:#f0f0f0;border:2px solid #b5ad88;box-sizing:border-box;border-radius:7px"></div>
<div class="t" style="left:859.1px;top:193px;font-size:25px;line-height:25px;color:#0e0610;font-weight:400;letter-spacing:0px;transform:scaleX(1.0500);transform-origin:0 0;">А<span style="font-size:23.8px">дрес</span></div>
<div class="t" style="left:681.24px;top:233px;font-size:25px;line-height:25px;color:#5c3022;font-weight:400;letter-spacing:0px;transform:scaleX(1.0571);transform-origin:0 0;">С<span style="font-size:23.8px">иноним</span></div>
<div style="left:853px;top:228px;width:442px;height:38px;background:#f0f0f0;border:2px solid #b5ad88;box-sizing:border-box;border-radius:7px"></div>
<div class="t" style="left:859.1px;top:235px;font-size:25px;line-height:25px;color:#0e0610;font-weight:400;letter-spacing:0px;transform:scaleX(1.0500);transform-origin:0 0;">А<span style="font-size:23.8px">дрес</span></div>
<div class="t" style="left:680.13px;top:274px;font-size:25px;line-height:25px;color:#5c3022;font-weight:400;letter-spacing:0px;transform:scaleX(1.0864);transform-origin:0 0;">К<span style="font-size:23.8px">омментарий</span></div>
<div style="left:853px;top:270px;width:442px;height:38px;background:#f0f0f0;border:2px solid #b5ad88;box-sizing:border-box;border-radius:7px"></div>
<div style="left:681px;top:325px;width:611px;height:2px;background:#dcd6c0"></div>
<div class="t" style="left:682.3px;top:346px;font-size:25px;line-height:25px;color:#5c3022;font-weight:400;letter-spacing:0px;transform:scaleX(1.0550);transform-origin:0 0;">Т<span style="font-size:23.8px">ип</span></div>
<div style="left:940px;top:341px;width:355px;height:38px;background:#f0f0f0;border:2px solid #b5ad88;box-sizing:border-box;border-radius:7px"></div>
<div style="left:1225px;top:343px;width:34px;height:34px;background:linear-gradient(#f1f0e2,#ede6cc);border-left:2px solid #c8c09c;box-sizing:border-box"></div>
<div style="left:1259px;top:343px;width:34px;height:34px;background:linear-gradient(#f1f0e2,#ede6cc);border-left:1px solid #d0c8a8;box-sizing:border-box;border-radius:0 5px 5px 0"></div>
<svg style="left:1231px;top:356px" width="22" height="12" viewBox="0 0 22 12"><path d="M1 1 H21 L11 11 Z" fill="#6a5008"/></svg>
<svg style="left:1264px;top:367px" width="26" height="6" viewBox="0 0 26 6"><rect x="1" y="0.5" width="5" height="5" fill="#6a5008"/><rect x="10" y="0.5" width="5" height="5" fill="#6a5008"/><rect x="19" y="0.5" width="5" height="5" fill="#6a5008"/></svg>
<div class="t" style="left:944.93px;top:348px;font-size:25px;line-height:25px;color:#0e0610;font-weight:400;letter-spacing:0px;transform:scaleX(1.0696);transform-origin:0 0;">С<span style="font-size:23.8px">трока</span></div>
<div style="left:678px;top:382px;width:262px;height:37px;background:#5468c2"></div>
<div class="t" style="left:681.8px;top:387px;font-size:25px;line-height:25px;color:#eef0ff;font-weight:400;letter-spacing:0px;transform:scaleX(1.0366);transform-origin:0 0;">Д<span style="font-size:23.8px">лина</span></div>
<div style="left:940px;top:382px;width:118px;height:39px;background:#f0f0f0;border:2px solid #b5ad88;box-sizing:border-box;border-radius:7px"></div>
<div style="left:1022px;top:384px;width:34px;height:35px;background:linear-gradient(#f1f0e2,#ede6cc);border-left:1px solid #d0c8a8;box-sizing:border-box;border-radius:0 5px 5px 0"></div>
<svg style="left:1032px;top:389px" width="17" height="25" viewBox="0 0 17 25"><path d="M1 9 L8 1 L15 9 Z M1 16 L8 24 L15 16 Z" fill="#7a6010"/></svg>
<div class="t" style="left:994.72px;top:390px;font-size:25px;line-height:25px;color:#0e0610;font-weight:400;letter-spacing:0px;transform:scaleX(0.8808);transform-origin:0 0;">50</div>
<div style="left:993px;top:387px;width:2px;height:29px;background:#000"></div>
<div class="t" style="left:682.3px;top:430px;font-size:25px;line-height:25px;color:#5c3022;font-weight:400;letter-spacing:0px;transform:scaleX(1.0647);transform-origin:0 0;">Д<span style="font-size:23.8px">опустимая длина</span></div>
<div style="left:940px;top:424px;width:355px;height:39px;background:#f0f0f0;border:2px solid #b5ad88;box-sizing:border-box;border-radius:7px"></div>
<div style="left:1259px;top:426px;width:34px;height:35px;background:linear-gradient(#f1f0e2,#ede6cc);border-left:2px solid #d0c8a8;box-sizing:border-box;border-radius:0 5px 5px 0"></div>
<svg style="left:1266px;top:439px" width="22" height="12" viewBox="0 0 22 12"><path d="M1 1 H21 L11 11 Z" fill="#6a5008"/></svg>
<div class="t" style="left:943.82px;top:432px;font-size:25px;line-height:25px;color:#0e0610;font-weight:400;letter-spacing:0px;transform:scaleX(1.0882);transform-origin:0 0;">П<span style="font-size:23.8px">еременная</span></div>
<div style="left:680px;top:462px;width:257px;height:40px;overflow:hidden">
<div class="t" style="left:0.09px;top:9px;font-size:25px;line-height:25px;color:#5c3022;transform:scaleX(1.1028);transform-origin:0 0">Н<span style="font-size:23.8px">еограниченная длина</span></div></div>
<div style="left:940px;top:470px;width:29px;height:28px;border:2px solid #bcb494;box-sizing:border-box;border-radius:5px;background:#f0f0f0"></div>
<svg style="left:664px;top:522px" width="14" height="9" viewBox="0 0 14 9"><path d="M0.5 0.5 H13.5 L7 8 Z" fill="#1e1e1e"/></svg>
<div class="t" style="left:681.25px;top:513px;font-size:24px;line-height:24px;color:#664808;font-weight:700;letter-spacing:0px;transform:scaleX(1.1526);transform-origin:0 0;">И<span style="font-size:24px">спользование:</span></div>
<div style="left:681px;top:542px;width:611px;height:2px;background:#dcd6c0"></div>
<div class="t" style="left:680.07px;top:552px;font-size:25px;line-height:25px;color:#5c3022;font-weight:400;letter-spacing:0px;transform:scaleX(1.1167);transform-origin:0 0;">И<span style="font-size:23.8px">спользование</span></div>
<div style="left:940px;top:547px;width:355px;height:38px;background:#f0f0f0;border:2px solid #b5ad88;box-sizing:border-box;border-radius:7px"></div>
<div style="left:1259px;top:549px;width:34px;height:34px;background:linear-gradient(#f1f0e2,#ede6cc);border-left:2px solid #d0c8a8;box-sizing:border-box;border-radius:0 5px 5px 0"></div>
<svg style="left:1266px;top:561px" width="22" height="12" viewBox="0 0 22 12"><path d="M1 1 H21 L11 11 Z" fill="#6a5008"/></svg>
<div class="t" style="left:946.0px;top:553px;font-size:25px;line-height:25px;color:#0e0610;font-weight:400;letter-spacing:0px;transform:scaleX(1.0558);transform-origin:0 0;">Д<span style="font-size:23.8px">ля элемента</span></div>
<div class="t" style="left:680.08px;top:594px;font-size:25px;line-height:25px;color:#5c3022;font-weight:400;letter-spacing:0px;transform:scaleX(1.1108);transform-origin:0 0;">И<span style="font-size:23.8px">ндексировать</span></div>
<div style="left:940px;top:589px;width:355px;height:38px;background:#f0f0f0;border:2px solid #b5ad88;box-sizing:border-box;border-radius:7px"></div>
<div style="left:1259px;top:591px;width:34px;height:34px;background:linear-gradient(#f1f0e2,#ede6cc);border-left:2px solid #d0c8a8;box-sizing:border-box;border-radius:0 5px 5px 0"></div>
<svg style="left:1266px;top:603px" width="22" height="12" viewBox="0 0 22 12"><path d="M1 1 H21 L11 11 Z" fill="#6a5008"/></svg>
<div class="t" style="left:943.79px;top:594px;font-size:25px;line-height:25px;color:#0e0610;font-weight:400;letter-spacing:0px;transform:scaleX(1.1035);transform-origin:0 0;">Н<span style="font-size:23.8px">е индексировать</span></div>
<div style="left:680px;top:627px;width:257px;height:40px;overflow:hidden">
<div class="t" style="left:0.08px;top:9px;font-size:25px;line-height:25px;color:#5c3022;transform:scaleX(1.1111);transform-origin:0 0">П<span style="font-size:23.8px">олнотекстовый поиск</span></div></div>
<div style="left:940px;top:630px;width:355px;height:38px;background:#f0f0f0;border:2px solid #b5ad88;box-sizing:border-box;border-radius:7px"></div>
<div style="left:1259px;top:632px;width:34px;height:34px;background:linear-gradient(#f1f0e2,#ede6cc);border-left:2px solid #d0c8a8;box-sizing:border-box;border-radius:0 5px 5px 0"></div>
<svg style="left:1266px;top:644px" width="22" height="12" viewBox="0 0 22 12"><path d="M1 1 H21 L11 11 Z" fill="#6a5008"/></svg>
<div class="t" style="left:943.75px;top:637px;font-size:25px;line-height:25px;color:#0e0610;font-weight:400;letter-spacing:0px;transform:scaleX(1.1258);transform-origin:0 0;">И<span style="font-size:23.8px">спользовать</span></div>
<div class="t" style="left:680.19px;top:678px;font-size:25px;line-height:25px;color:#5c3022;font-weight:400;letter-spacing:0px;transform:scaleX(1.0567);transform-origin:0 0;">И<span style="font-size:23.8px">стория данных</span></div>
<div style="left:940px;top:672px;width:355px;height:38px;background:#f0f0f0;border:2px solid #b5ad88;box-sizing:border-box;border-radius:7px"></div>
<div style="left:1259px;top:674px;width:34px;height:34px;background:linear-gradient(#f1f0e2,#ede6cc);border-left:2px solid #d0c8a8;box-sizing:border-box;border-radius:0 5px 5px 0"></div>
<svg style="left:1266px;top:686px" width="22" height="12" viewBox="0 0 22 12"><path d="M1 1 H21 L11 11 Z" fill="#6a5008"/></svg>
<div class="t" style="left:943.75px;top:679px;font-size:25px;line-height:25px;color:#0e0610;font-weight:400;letter-spacing:0px;transform:scaleX(1.1258);transform-origin:0 0;">И<span style="font-size:23.8px">спользовать</span></div>
<svg style="left:664px;top:730px" width="14" height="9" viewBox="0 0 14 9"><path d="M0.5 0.5 H13.5 L7 8 Z" fill="#1e1e1e"/></svg>
<div class="t" style="left:681.24px;top:720px;font-size:24px;line-height:24px;color:#664808;font-weight:700;letter-spacing:0px;transform:scaleX(1.1566);transform-origin:0 0;">П<span style="font-size:24px">редставление:</span></div>
<div style="left:681px;top:750px;width:611px;height:2px;background:#dcd6c0"></div>
<div class="t" style="left:680.16px;top:760px;font-size:25px;line-height:25px;color:#5c3022;font-weight:400;letter-spacing:0px;transform:scaleX(1.0720);transform-origin:0 0;">Р<span style="font-size:23.8px">ежим пароля</span></div>
<div style="left:940px;top:758px;width:29px;height:28px;border:2px solid #bcb494;box-sizing:border-box;border-radius:5px;background:#f0f0f0"></div>
<div class="t" style="left:680.07px;top:799px;font-size:25px;line-height:25px;color:#5c3022;font-weight:400;letter-spacing:0px;transform:scaleX(1.1167);transform-origin:0 0;">П<span style="font-size:23.8px">одсказка</span></div>
<div style="left:940px;top:794px;width:355px;height:118px;background:#f0f0f0;border:2px solid #b5ad88;box-sizing:border-box;border-radius:7px"></div>
<div class="t" style="left:680.16px;top:922px;font-size:25px;line-height:25px;color:#5c3022;font-weight:400;letter-spacing:0px;transform:scaleX(1.0721);transform-origin:0 0;">М<span style="font-size:23.8px">аска</span></div>
<div style="left:940px;top:916px;width:355px;height:39px;background:#f0f0f0;border:2px solid #b5ad88;box-sizing:border-box;border-radius:7px"></div>
<div style="left:680px;top:955px;width:257px;height:40px;overflow:hidden">
<div class="t" style="left:0.09px;top:8px;font-size:25px;line-height:25px;color:#5c3022;transform:scaleX(1.1035);transform-origin:0 0">М<span style="font-size:23.8px">ногострочный режим</span></div></div>
<div style="left:940px;top:962px;width:29px;height:28px;border:2px solid #bcb494;box-sizing:border-box;border-radius:5px;background:#f0f0f0"></div>
<div style="left:680px;top:995px;width:257px;height:40px;overflow:hidden">
<div class="t" style="left:0.19px;top:9px;font-size:25px;line-height:25px;color:#5c3022;transform:scaleX(1.0556);transform-origin:0 0">Р<span style="font-size:23.8px">асширенное редактирование</span></div></div>
<div style="left:940px;top:1002px;width:29px;height:28px;border:2px solid #bcb494;box-sizing:border-box;border-radius:5px;background:#f0f0f0"></div>
<div style="left:681px;top:1052px;width:611px;height:2px;background:#dcd6c0"></div>
<div class="t" style="left:681.23px;top:1073px;font-size:25px;line-height:25px;color:#5c3022;font-weight:400;letter-spacing:0px;transform:scaleX(1.0665);transform-origin:0 0;">З<span style="font-size:23.8px">аполнять из данных</span></div>
<div style="left:940px;top:1072px;width:29px;height:28px;border:2px solid #bcb494;box-sizing:border-box;border-radius:5px;background:#f0f0f0"></div>
<div style="left:680px;top:1104px;width:257px;height:31px;overflow:hidden">
<div class="t" style="left:1.19px;top:9px;font-size:25px;line-height:25px;color:#5c3022;transform:scaleX(1.1135);transform-origin:0 0">З<span style="font-size:23.8px">начение заполнения</span></div></div>
<div style="left:940px;top:1108px;width:355px;height:42px;background:#f0f0f0;border:2px solid #b5ad88;box-sizing:border-box;border-radius:7px"></div>
<div style="left:1300px;top:144px;width:2px;height:991px;background:#b5ad88"></div>
<div style="left:1302px;top:144px;width:35px;height:914px;background:linear-gradient(90deg,#f2f1e6 0%,#f1ecd0 45%,#e2dab8 100%)"></div>
<div style="left:1302px;top:144px;width:35px;height:47px;background:linear-gradient(90deg,#f1f0e4,#efe9d0 70%,#e8e0c0)"></div>
<div style="left:1302px;top:190px;width:35px;height:2px;background:#b5ad88"></div>
<div style="left:1302px;top:1057px;width:35px;height:2px;background:#b5ad88"></div>
<div style="left:1336px;top:144px;width:2px;height:991px;background:#b5ad88"></div>
<div style="left:1338px;top:144px;width:34px;height:844px;background:linear-gradient(90deg,#f2f1e6 0%,#f1ecd0 45%,#e2dab8 100%)"></div>
<div style="left:1338px;top:144px;width:34px;height:47px;background:linear-gradient(90deg,#f1f1ec,#efecd8 70%,#e8e0c4)"></div>
<div style="left:1338px;top:190px;width:34px;height:2px;background:#b5ad88"></div>
<div style="left:1338px;top:986px;width:34px;height:2px;background:#b5ad88"></div>
<div style="left:1338px;top:1087px;width:34px;height:48px;background:linear-gradient(90deg,#f0f0e8,#ede8d2 80%,#e6dfc4)"></div>
<div style="left:1338px;top:1087px;width:34px;height:2px;background:#b5ad88"></div>
<svg style="left:1309px;top:156px" width="18" height="18" viewBox="0 0 18 18"><defs><linearGradient id="sa" x1="0" y1="0" x2="0" y2="1"><stop offset="0" stop-color="#b8b6a8"/><stop offset="1" stop-color="#dcdad0"/></linearGradient></defs><path d="M9 1 L17 17 H1 Z" fill="url(#sa)"/></svg>
<svg style="left:1345px;top:156px" width="18" height="18" viewBox="0 0 18 18"><path d="M9 1 L17 17 H1 Z" fill="url(#sa)"/></svg>
<svg style="left:1346px;top:1104px" width="18" height="18" viewBox="0 0 18 18"><defs><linearGradient id="sd" x1="0" y1="0" x2="0" y2="1"><stop offset="0" stop-color="#5a5a5a"/><stop offset="1" stop-color="#a0a0a0"/></linearGradient></defs><path d="M1 1 H17 L9 17 Z" fill="url(#sd)"/></svg>
<div style="left:661px;top:1135px;width:715px;height:2px;background:#f0f0f0"></div>
<div style="left:661px;top:1137px;width:715px;height:114px;background:#eeeee8;border:2px solid #b5ad88;box-sizing:border-box;border-radius:7px"></div>
<div class="t" style="left:667.0px;top:1145px;font-size:25px;line-height:25px;color:#0e0610;font-weight:400;letter-spacing:0px;transform:scaleX(1.0239);transform-origin:0 0;">Д<span style="font-size:23.8px">лина</span></div>
<div style="left:661px;top:1251px;width:715px;height:43px;background:#f0efe8"></div>
<div style="left:669px;top:1251px;width:276px;height:43px;background:#f0efe8;border:2px solid #b5ad88;border-top:none;box-sizing:border-box;border-radius:0 0 8px 8px"></div>
<div style="left:673px;top:1290px;width:268px;height:4px;background:#f0d898;border-radius:0 0 4px 4px"></div>
<div style="left:957px;top:1251px;width:348px;height:43px;background:#ede6cf;border:2px solid #d8d0b0;border-top:none;box-sizing:border-box;border-radius:0 0 8px 8px"></div>
<svg style="left:686px;top:1252px" width="38" height="37" viewBox="0 0 38 37"><rect x="1.5" y="10" width="28.5" height="25" fill="#edf2f6" stroke="#a8bcd4" stroke-width="1.5"/><rect x="1" y="33" width="29" height="2.5" fill="#b4c8c4"/><rect x="5" y="21" width="21" height="10" fill="#d6e2ee"/><path d="M5 28 H26" stroke="#9cb0c8" stroke-width="1.5"/><rect x="30" y="3" width="7" height="15" fill="#dfe8f2"/><rect x="30" y="12" width="7" height="6" fill="#7890a4"/><path d="M4 13 Q6 5 13 2 H30 V13 Q26 16 22 16 L18 22 L13 15 Q9 13 4 13 Z" fill="#d49a6c"/><path d="M12 3 H28 V11 Q22 11 18 8 Z" fill="#e8b690"/></svg>
<div class="t" style="left:726.55px;top:1259px;font-size:25px;line-height:25px;color:#5c3022;font-weight:400;letter-spacing:0px;transform:scaleX(1.0538);transform-origin:0 0;">С<span style="font-size:23.8px">войства: </span>А<span style="font-size:23.8px">дрес</span></div>
<svg style="left:974px;top:1252px" width="36" height="37" viewBox="0 0 36 37"><rect x="3" y="6" width="22" height="21" fill="#d8e2ec" stroke="#90a8bc" stroke-width="2"/><rect x="12" y="2.5" width="13" height="4" fill="#6e90ac"/><rect x="8" y="12" width="23" height="20" fill="#e4ecf4" stroke="#8ca4b8" stroke-width="2"/><rect x="19" y="8" width="12" height="4" fill="#5e84a4"/><rect x="13" y="17" width="20" height="18" fill="#f0f4f8" stroke="#8aa0b4" stroke-width="2"/><path d="M10 1 V19 M1 9.5 H19" stroke="#3aa822" stroke-width="4.5"/></svg>
<div class="t" style="left:1015.6px;top:1259px;font-size:25px;line-height:25px;color:#5c3022;font-weight:400;letter-spacing:0px;transform:scaleX(1.0672);transform-origin:0 0;">Д<span style="font-size:23.8px">ополнительно: </span>А<span style="font-size:23.8px">дрес</span></div>
</body></html>
